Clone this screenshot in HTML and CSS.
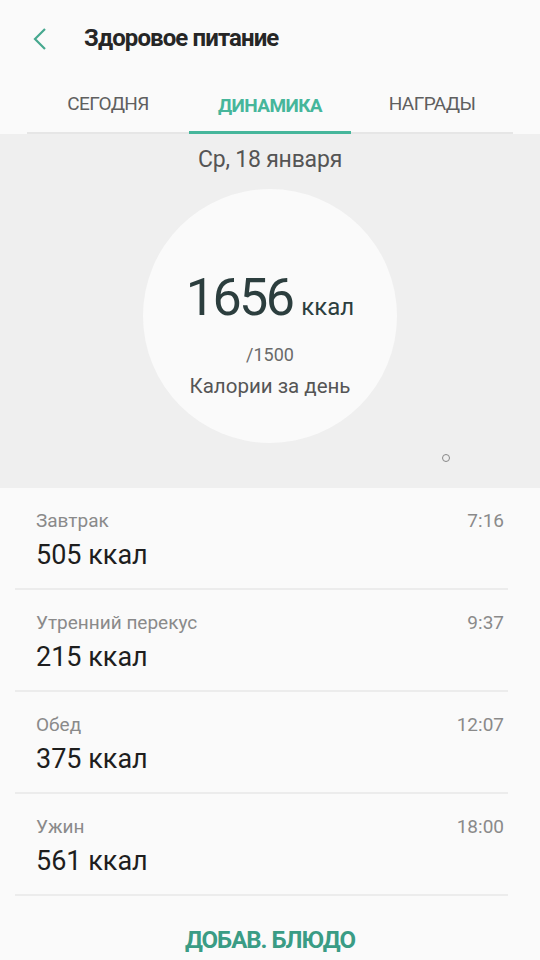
FILE: index.html
```html
<!DOCTYPE html>
<html lang="ru">
<head>
    <meta charset="UTF-8">
    <meta name="viewport" content="width=device-width, initial-scale=1.0">
    <title>Здоровое питание</title>
    <link rel="stylesheet" href="styles.css">
</head>
<body>
    <div class="header">
        <svg class="back" width="16" height="24" viewBox="0 0 16 24"><path d="M13 2 L3 12 L13 22" fill="none" stroke="#46a88f" stroke-width="2.2"/></svg>
        <h1>Здоровое питание</h1>
    </div>

    <div class="tabs">
        <div class="tab">СЕГОДНЯ</div>
        <div class="tab active">ДИНАМИКА</div>
        <div class="tab">НАГРАДЫ</div>
    </div>

    <div class="summary">
        <div class="date">Ср, 18 января</div>
        <div class="circle">
            <div class="total"><span class="num">1656</span><span class="unit">ккал</span></div>
            <div class="goal">/1500</div>
            <div class="caption">Калории за день</div>
        </div>
        <span class="dot"></span>
    </div>

    <div class="meals">
        <div class="meal">
            <div class="meal-top"><span>Завтрак</span><span>7:16</span></div>
            <div class="meal-kcal">505 ккал</div>
        </div>
        <div class="meal">
            <div class="meal-top"><span>Утренний перекус</span><span>9:37</span></div>
            <div class="meal-kcal">215 ккал</div>
        </div>
        <div class="meal">
            <div class="meal-top"><span>Обед</span><span>12:07</span></div>
            <div class="meal-kcal">375 ккал</div>
        </div>
        <div class="meal">
            <div class="meal-top"><span>Ужин</span><span>18:00</span></div>
            <div class="meal-kcal">561 ккал</div>
        </div>
    </div>
    <button class="add">ДОБАВ. БЛЮДО</button>
</body>
</html>
```

FILE: styles.css
```css
body { margin: 0; font-family: Roboto, "Noto Sans", sans-serif; background-color: #fafafa; color: #222; overflow: hidden; }
.header { display: flex; align-items: center; height: 76px; padding-left: 32px; }
.back { margin-top: 1px; }
.header h1 { margin: 0 0 0 36px; font-size: 24px; font-weight: bold; color: #262626; letter-spacing: -0.9px; }
.tabs { display: flex; margin: 0 27px; height: 56px; border-bottom: 2px solid #e6e6e6; }
.tab { flex: 1; display: flex; align-items: center; justify-content: center; font-size: 19px; color: #5f5f5f; letter-spacing: -0.6px; padding-bottom: 2px; }
.tab.active { color: #46b69b; font-weight: bold; box-shadow: inset 0 -3px 0 #46b69b; margin-bottom: -2px; padding-bottom: 0; }
.summary { position: relative; background-color: #efefef; height: 354px; display: flex; flex-direction: column; align-items: center; }
.date { margin-top: 12px; font-size: 23px; color: #555; letter-spacing: -0.2px; }
.circle { margin-top: 16px; width: 254px; height: 254px; border-radius: 50%; background-color: #fafafa; display: flex; flex-direction: column; align-items: center; justify-content: center; }
.total { display: flex; align-items: baseline; margin-top: 32px; }
.num { font-size: 52px; color: #2c3e3e; letter-spacing: -2.6px; }
.unit { font-size: 24px; color: #2c3e3e; margin-left: 9px; }
.goal { font-size: 18px; color: #6a6a6a; margin-top: 16px; }
.caption { font-size: 20.5px; color: #555; margin-top: 9px; }
.dot { position: absolute; left: 442px; top: 320px; width: 6px; height: 6px; border: 1px solid #888; border-radius: 50%; }
.meals { padding: 0 32px 0 15px; }
.meal { padding: 21px 4px 18px 21px; border-bottom: 2px solid #ececec; height: 61px; }
.meal-top { display: flex; justify-content: space-between; font-size: 19px; color: #8a8a8a; }
.meal-kcal { font-size: 27px; color: #1e1e1e; margin-top: 7px; }
.add { display: block; margin: 29px auto 0; border: none; background: none; font-family: Roboto, sans-serif; font-weight: bold; font-size: 24px; color: #3a9c85; letter-spacing: -1px; }
```
